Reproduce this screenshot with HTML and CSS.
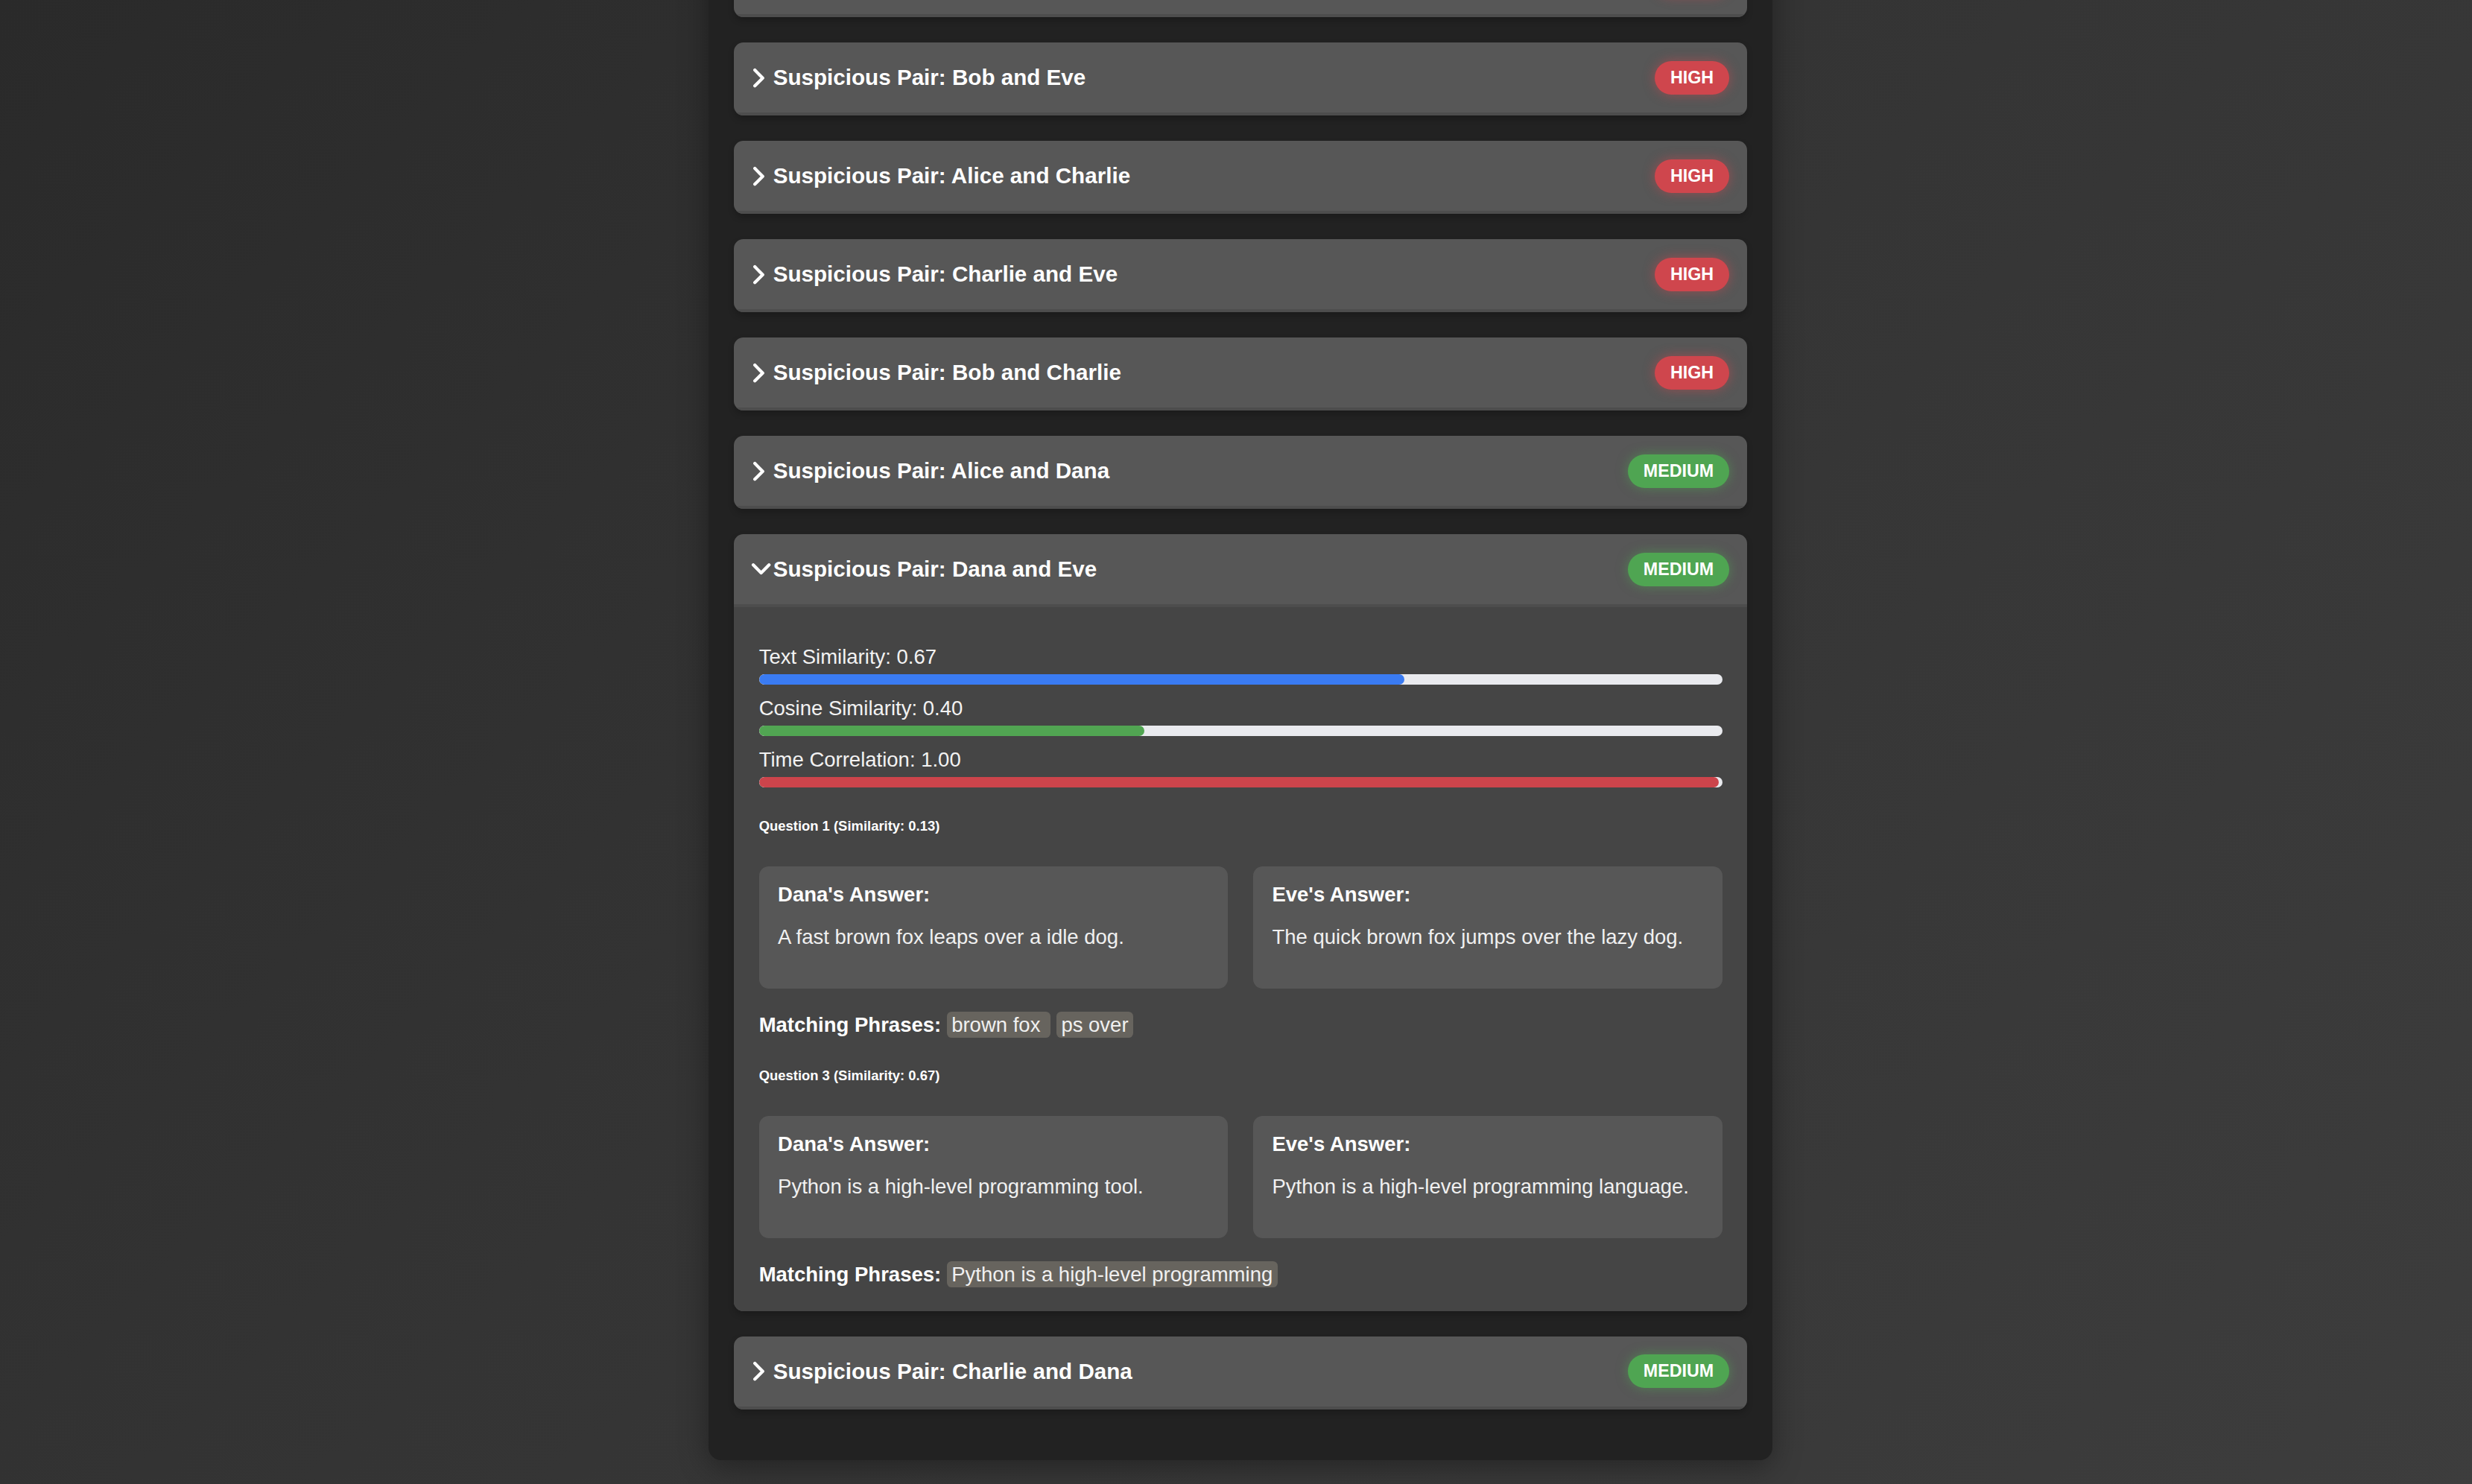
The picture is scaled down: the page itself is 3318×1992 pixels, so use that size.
FILE: index.html
```html
<!DOCTYPE html>
<html lang="en">
<head>
<meta charset="utf-8">
<title>Suspicious Pairs</title>
<link rel="stylesheet" href="styles.css">
</head>
<body>
<main class="panel">
  <section class="pair">
    <div class="pair-head">
      <span class="pair-title"><svg class="chev" viewBox="0 0 12 12"><path d="M1.5 1 L6.5 6 L1.5 11"/></svg>Suspicious Pair: Alice and Bob</span>
      <span class="badge high">HIGH</span>
    </div>
  </section>
  <section class="pair">
    <div class="pair-head">
      <span class="pair-title"><svg class="chev" viewBox="0 0 12 12"><path d="M1.5 1 L6.5 6 L1.5 11"/></svg>Suspicious Pair: Bob and Eve</span>
      <span class="badge high">HIGH</span>
    </div>
  </section>
  <section class="pair">
    <div class="pair-head">
      <span class="pair-title"><svg class="chev" viewBox="0 0 12 12"><path d="M1.5 1 L6.5 6 L1.5 11"/></svg>Suspicious Pair: Alice and Charlie</span>
      <span class="badge high">HIGH</span>
    </div>
  </section>
  <section class="pair">
    <div class="pair-head">
      <span class="pair-title"><svg class="chev" viewBox="0 0 12 12"><path d="M1.5 1 L6.5 6 L1.5 11"/></svg>Suspicious Pair: Charlie and Eve</span>
      <span class="badge high">HIGH</span>
    </div>
  </section>
  <section class="pair">
    <div class="pair-head">
      <span class="pair-title"><svg class="chev" viewBox="0 0 12 12"><path d="M1.5 1 L6.5 6 L1.5 11"/></svg>Suspicious Pair: Bob and Charlie</span>
      <span class="badge high">HIGH</span>
    </div>
  </section>
  <section class="pair">
    <div class="pair-head">
      <span class="pair-title"><svg class="chev" viewBox="0 0 12 12"><path d="M1.5 1 L6.5 6 L1.5 11"/></svg>Suspicious Pair: Alice and Dana</span>
      <span class="badge medium">MEDIUM</span>
    </div>
  </section>
  <section class="pair open">
    <div class="pair-head">
      <span class="pair-title"><svg class="chev" viewBox="0 0 12 12"><path d="M0.5 3 L5.5 8 L10.5 3"/></svg>Suspicious Pair: Dana and Eve</span>
      <span class="badge medium">MEDIUM</span>
    </div>
    <div class="pair-body">
      <div class="metric">
        <div class="metric-label">Text Similarity: 0.67</div>
        <div class="track"><div class="fill blue" style="width:67%"></div></div>
      </div>
      <div class="metric">
        <div class="metric-label">Cosine Similarity: 0.40</div>
        <div class="track"><div class="fill green" style="width:40%"></div></div>
      </div>
      <div class="metric">
        <div class="metric-label">Time Correlation: 1.00</div>
        <div class="track"><div class="fill red" style="width:100%"></div></div>
      </div>

      <div class="question">
        <h6>Question 1 (Similarity: 0.13)</h6>
        <div class="answers">
          <div class="answer">
            <strong>Dana's Answer:</strong>
            <p>A fast brown fox leaps over a idle dog.</p>
          </div>
          <div class="answer">
            <strong>Eve's Answer:</strong>
            <p>The quick brown fox jumps over the lazy dog.</p>
          </div>
        </div>
        <div class="matches"><strong>Matching Phrases:</strong> <span class="chip">brown fox&nbsp;</span> <span class="chip">ps over</span></div>
      </div>

      <div class="question">
        <h6>Question 3 (Similarity: 0.67)</h6>
        <div class="answers">
          <div class="answer">
            <strong>Dana's Answer:</strong>
            <p>Python is a high-level programming tool.</p>
          </div>
          <div class="answer">
            <strong>Eve's Answer:</strong>
            <p>Python is a high-level programming language.</p>
          </div>
        </div>
        <div class="matches"><strong>Matching Phrases:</strong> <span class="chip">Python is a high-level programming</span></div>
      </div>
    </div>
  </section>
  <section class="pair">
    <div class="pair-head">
      <span class="pair-title"><svg class="chev" viewBox="0 0 12 12"><path d="M1.5 1 L6.5 6 L1.5 11"/></svg>Suspicious Pair: Charlie and Dana</span>
      <span class="badge medium">MEDIUM</span>
    </div>
  </section>
</main>
</body>
</html>
```

FILE: styles.css
```css
html {
  zoom: 2.116;
  min-height: 100%;
  background: linear-gradient(135deg, #2a2a2a 0%, #343434 45%, #3d3d3d 100%);
}

body {
  margin: 0;
  padding: 0 0 40px 5.8px;
  font-family: "Liberation Sans", Arial, Helvetica, sans-serif;
  font-size: 13px;
  line-height: normal;
  color: #f0f0f0;
}

.panel {
  box-sizing: border-box;
  width: 675px;
  margin: -51.3px auto 0;
  padding: 16px 16px 16px;
  background: #222222;
  border-radius: 0 0 8px 8px;
  box-shadow: 0 4px 18px rgba(0, 0, 0, 0.35);
}

.pair {
  margin-bottom: 16px;
  background: #575757;
  border-radius: 6px;
  overflow: hidden;
  box-shadow: 0 2px 4px rgba(0, 0, 0, 0.2);
}

.pair-head {
  display: flex;
  align-items: center;
  justify-content: space-between;
  height: 44.5px;
  padding: 0 11.4px 0 12px;
  border-bottom: 2px solid #4d4d4d;
}

.pair-title {
  display: flex;
  align-items: center;
  font-size: 14px;
  font-weight: bold;
  color: #ffffff;
}

.chev {
  width: 12px;
  height: 12px;
  margin-right: 1px;
  overflow: visible;
  flex: none;
}

.chev path {
  fill: none;
  stroke: #ffffff;
  stroke-width: 2;
  stroke-linecap: round;
  stroke-linejoin: round;
}

.badge {
  display: inline-block;
  height: 21.3px;
  line-height: 21.3px;
  padding: 0 10px;
  border-radius: 11px;
  font-size: 11px;
  font-weight: bold;
  color: #ffffff;
}

.badge.high {
  background: #cf464d;
  box-shadow: 0 0 7px rgba(207, 70, 77, 0.55);
}

.badge.medium {
  background: #4fa552;
  box-shadow: 0 0 7px rgba(79, 165, 82, 0.55);
}

.pair-body {
  background: #454545;
  padding: 24px 16px 15.7px;
}

.metric {
  margin-bottom: 7.4px;
}

.metric-label {
  line-height: 15px;
  margin-bottom: 3.5px;
  color: #f2f2f2;
}

.track {
  height: 6.6px;
  background: #e9eaee;
  border-radius: 4px;
  overflow: hidden;
}

.fill {
  height: 100%;
  max-width: calc(100% - 2.4px);
  border-radius: 4px;
}

.fill.blue { background: #3a7bf2; }
.fill.green { background: #51a552; }
.fill.red { background: #cc444b; }

.question h6 {
  font-size: 0.67em;
  font-weight: bold;
  line-height: 9.5px;
  margin: 20px 0 20.5px;
  color: #ffffff;
}

.answers {
  display: grid;
  grid-template-columns: 1fr 1fr;
  gap: 16px;
}

.answer {
  background: #575757;
  border-radius: 6px;
  padding: 10.8px 12px;
  line-height: 15px;
}

.answer strong {
  display: block;
  color: #ffffff;
}

.answer p {
  margin: 11.8px 0 14.2px;
  color: #f0f0f0;
}

.matches {
  margin-top: 15.7px;
  line-height: 15px;
}

.matches strong {
  color: #ffffff;
}

.chip {
  padding: 1px 3px;
  background: #67645e;
  border-radius: 3px;
  color: #f0f0f0;
}
```
